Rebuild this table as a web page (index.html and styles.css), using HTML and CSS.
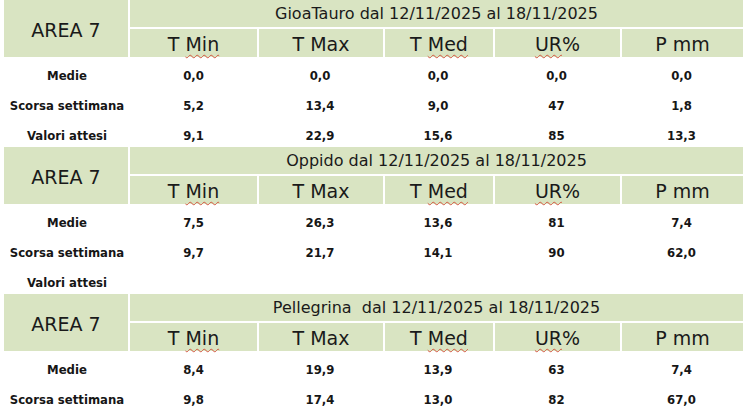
FILE: index.html
```html
<!DOCTYPE html>
<html lang="it">
<head>
<meta charset="utf-8">
<title>Area 7</title>
<link rel="stylesheet" href="styles.css">
</head>
<body>
<div class="page">
  <table class="sec">
    <colgroup><col class="c1"><col class="c2"><col class="c3"><col class="c4"><col class="c5"><col class="c6"></colgroup>
    <thead>
      <tr class="r-title"><th class="area" rowspan="2">AREA 7</th><th class="title" colspan="5">GioaTauro dal 12/11/2025 al 18/11/2025</th></tr>
      <tr class="r-head"><th class="first">T <span class="sp">Min</span></th><th>T Max</th><th>T <span class="sp">Med</span></th><th><span class="sp">UR</span>%</th><th>P mm</th></tr>
    </thead>
    <tbody>
      <tr><td class="lbl">Medie</td><td>0,0</td><td>0,0</td><td>0,0</td><td>0,0</td><td>0,0</td></tr>
      <tr><td class="lbl">Scorsa settimana</td><td>5,2</td><td>13,4</td><td>9,0</td><td>47</td><td>1,8</td></tr>
      <tr><td class="lbl">Valori attesi</td><td>9,1</td><td>22,9</td><td>15,6</td><td>85</td><td>13,3</td></tr>
    </tbody>
  </table>
  <table class="sec">
    <colgroup><col class="c1"><col class="c2"><col class="c3"><col class="c4"><col class="c5"><col class="c6"></colgroup>
    <thead>
      <tr class="r-title"><th class="area" rowspan="2">AREA 7</th><th class="title" colspan="5">Oppido dal 12/11/2025 al 18/11/2025</th></tr>
      <tr class="r-head"><th class="first">T <span class="sp">Min</span></th><th>T Max</th><th>T <span class="sp">Med</span></th><th><span class="sp">UR</span>%</th><th>P mm</th></tr>
    </thead>
    <tbody>
      <tr><td class="lbl">Medie</td><td>7,5</td><td>26,3</td><td>13,6</td><td>81</td><td>7,4</td></tr>
      <tr><td class="lbl">Scorsa settimana</td><td>9,7</td><td>21,7</td><td>14,1</td><td>90</td><td>62,0</td></tr>
      <tr><td class="lbl">Valori attesi</td><td></td><td></td><td></td><td></td><td></td></tr>
    </tbody>
  </table>
  <table class="sec">
    <colgroup><col class="c1"><col class="c2"><col class="c3"><col class="c4"><col class="c5"><col class="c6"></colgroup>
    <thead>
      <tr class="r-title"><th class="area" rowspan="2">AREA 7</th><th class="title pre" colspan="5">Pellegrina  dal 12/11/2025 al 18/11/2025</th></tr>
      <tr class="r-head"><th class="first">T <span class="sp">Min</span></th><th>T Max</th><th>T <span class="sp">Med</span></th><th><span class="sp">UR</span>%</th><th>P mm</th></tr>
    </thead>
    <tbody>
      <tr><td class="lbl">Medie</td><td>8,4</td><td>19,9</td><td>13,9</td><td>63</td><td>7,4</td></tr>
      <tr><td class="lbl">Scorsa settimana</td><td>9,8</td><td>17,4</td><td>13,0</td><td>82</td><td>67,0</td></tr>
    </tbody>
  </table>
</div>
</body>
</html>
```

FILE: styles.css
```css
html, body {
  margin: 0;
  padding: 0;
  background: #ffffff;
  overflow: hidden;
}

.page {
  padding-left: 4px;
  font-family: "DejaVu Sans", sans-serif;
  color: #1a1a1a;
}

.sec {
  width: 739px;
  table-layout: fixed;
  border-collapse: separate;
  border-spacing: 0;
}

.c1 { width: 126px; }
.c2 { width: 127px; }
.c3 { width: 126px; }
.c4 { width: 110px; }
.c5 { width: 127px; }
.c6 { width: 123px; }

th {
  background: #d9e4c2;
  font-weight: normal;
  padding: 0;
  text-align: center;
  color: #1a1a1a;
  box-sizing: border-box;
}

.area {
  font-size: 19px;
  border-right: 2px solid #fff;
  padding-top: 2px;
}

.r-title th.title {
  height: 29px;
  font-size: 16px;
  line-height: 27px;
  border-bottom: 2px solid #fff;
  vertical-align: middle;
}

.pre { white-space: pre; }

.r-head th {
  height: 28px;
  font-size: 19px;
  border-left: 2px solid #fff;
  padding-top: 3px;
  line-height: 25px;
}

.r-head th.first { border-left: 0; }

.sp {
  text-decoration: underline wavy #d2553e;
  text-decoration-thickness: 1px;
  text-underline-offset: 3px;
}

td {
  height: 30px;
  padding: 6px 0 0 0;
  text-align: center;
  font-family: "DejaVu Sans Condensed", "DejaVu Sans", sans-serif;
  font-stretch: condensed;
  font-size: 13px;
  font-weight: bold;
  color: #161616;
  vertical-align: middle;
  box-sizing: border-box;
}
```
